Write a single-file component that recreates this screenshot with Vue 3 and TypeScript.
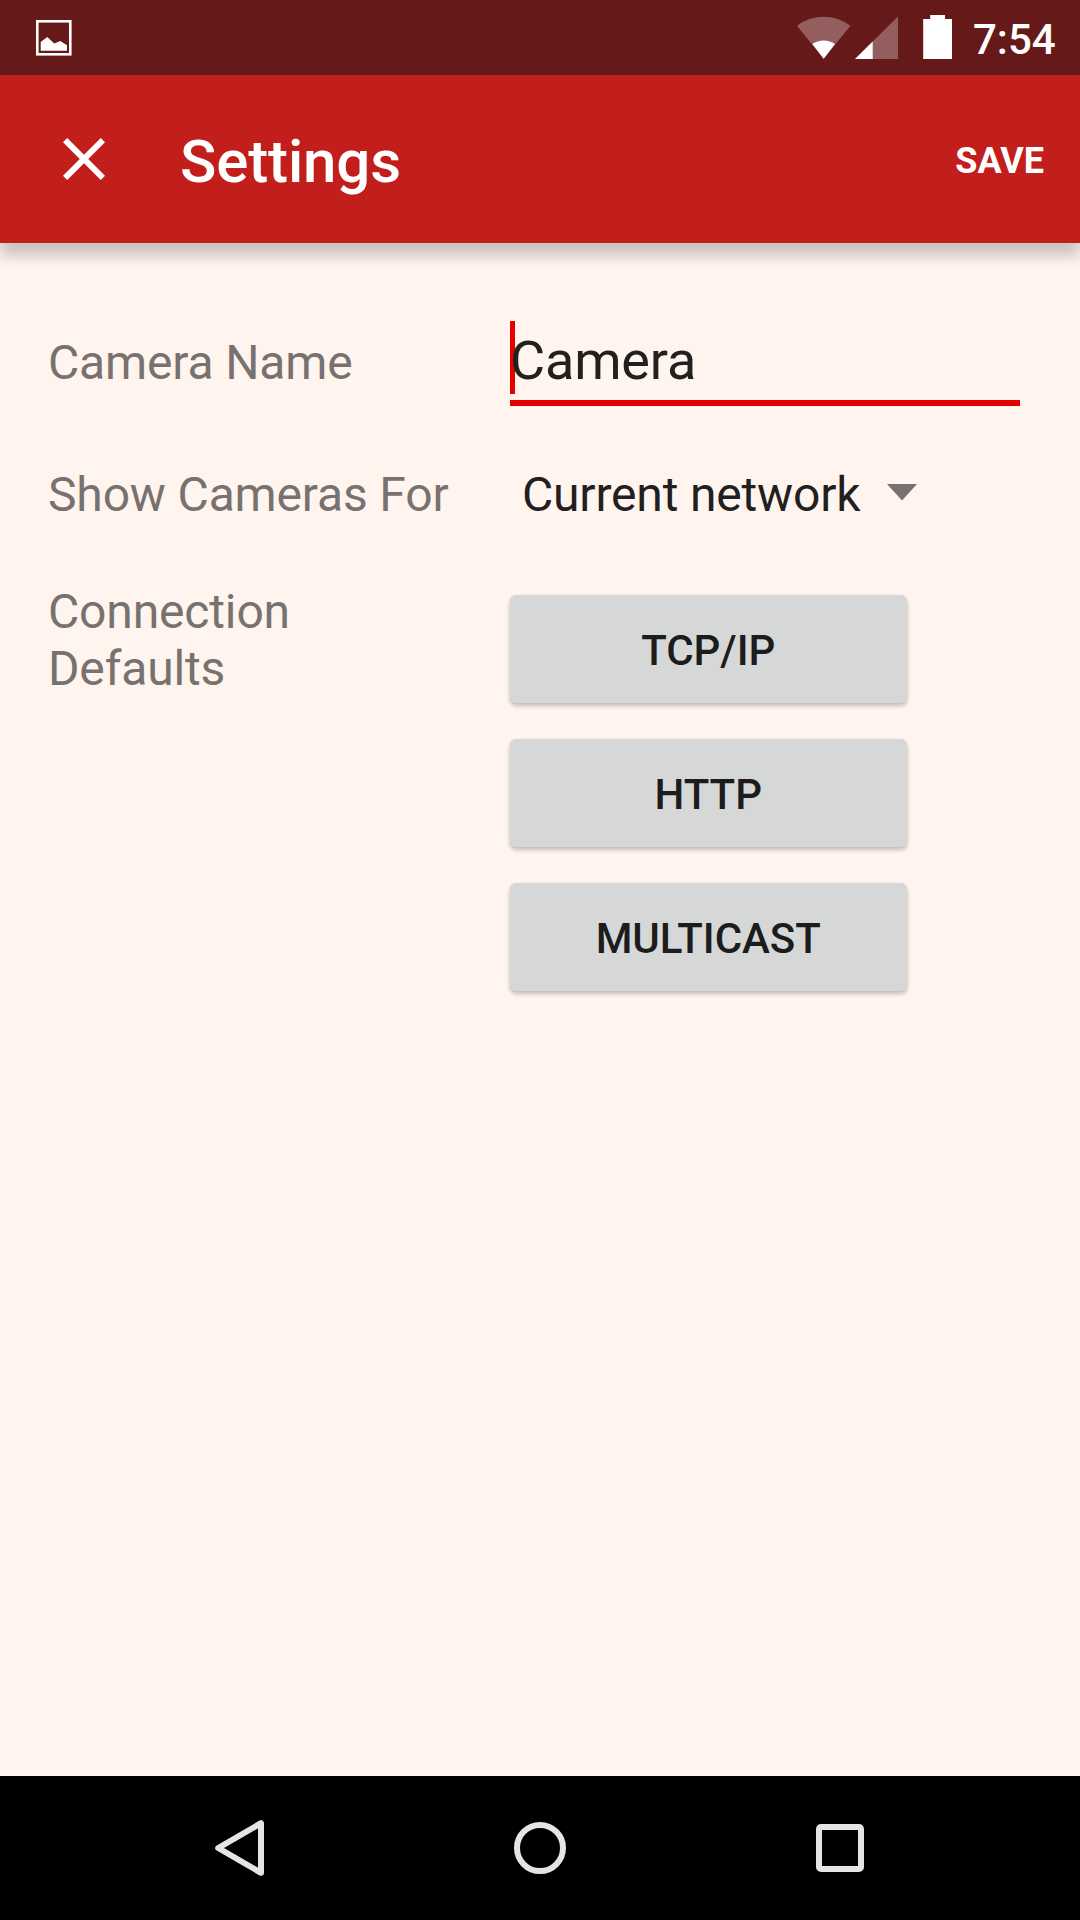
<script setup lang="ts">
import { ref } from 'vue'

const cameraName = ref<string>('Camera')
const networkScope = ref<string>('Current network')
const connectionTypes: string[] = ['TCP/IP', 'HTTP', 'MULTICAST']
</script>

<template>
  <div class="screen">
    <div class="status-bar">
      <svg class="picture-icon" width="36" height="36" viewBox="0 0 36 36">
        <rect x="1.3" y="1.3" width="33" height="33" fill="none" stroke="#fff" stroke-width="2.6" />
        <path d="M4.7 22 11.3 17 18.3 23.5 24.3 21 31 25.3V30.7H4.7z" fill="#fff" />
      </svg>
      <svg class="radio-icons" width="156" height="45" viewBox="0 0 156 45">
        <path d="M0 10.7A44 44 0 0 1 53.4 10.7L26.7 43.7z" fill="#fff" fill-opacity=".3" />
        <path d="M15.3 29A20 20 0 0 1 38 29L26.7 43.7z" fill="#fff" />
        <path d="M58 44 101 1.5V44z" fill="#fff" fill-opacity=".3" />
        <path d="M58 44 75.7 26.5V44z" fill="#fff" />
        <path d="M133.2 0H148V4H155V44H126.2V4H133.2z" fill="#fff" />
      </svg>
      <span class="clock">7:54</span>
    </div>

    <header class="app-bar">
      <svg class="close-icon" width="72" height="72" viewBox="0 0 24 24">
        <path d="M19 6.41 17.59 5 12 10.59 6.41 5 5 6.41 10.59 12 5 17.59 6.41 19 12 13.41 17.59 19 19 17.59 13.41 12z" fill="#fff" />
      </svg>
      <h1 class="title">Settings</h1>
      <span class="save">SAVE</span>
    </header>

    <main class="content">
      <div class="row name-row">
        <span class="label">Camera Name</span>
        <div class="field">
          <i class="caret"></i>
          <span class="value">{{ cameraName }}</span>
        </div>
      </div>
      <div class="row network-row">
        <span class="label">Show Cameras For</span>
        <div class="spinner">
          <span class="choice">{{ networkScope }}</span>
          <svg class="arrow" width="30" height="17" viewBox="0 0 30 17">
            <path d="M0 0H30L15 16.5z" fill="#77726f" />
          </svg>
        </div>
      </div>
      <div class="row defaults-row">
        <span class="label">Connection<br />Defaults</span>
        <div class="buttons">
          <button v-for="type in connectionTypes" :key="type" class="button">{{ type }}</button>
        </div>
      </div>
    </main>

    <nav class="nav-bar">
      <svg width="60" height="60" viewBox="0 0 60 60">
        <path d="M8.2 30 51 5.2V54.8z" fill="none" stroke="#e5e5e5" stroke-width="6" stroke-linejoin="round" />
      </svg>
      <svg width="60" height="60" viewBox="0 0 60 60">
        <circle cx="30" cy="30" r="23" fill="none" stroke="#e5e5e5" stroke-width="6" />
      </svg>
      <svg width="60" height="60" viewBox="0 0 60 60">
        <rect x="9" y="9" width="42" height="42" rx="2" fill="none" stroke="#e5e5e5" stroke-width="6" />
      </svg>
    </nav>
  </div>
</template>

<style>
body {
  margin: 0;
}
</style>

<style scoped>
.screen {
  width: 1080px;
  height: 1920px;
  display: flex;
  flex-direction: column;
  background: #fff4ee;
  font-family: Roboto, "Liberation Sans", sans-serif;
  overflow: hidden;
}
.status-bar {
  height: 75px;
  flex: none;
  display: flex;
  align-items: flex-start;
  background: #661919;
  color: #fff;
}
.picture-icon {
  margin: 20px 0 0 36px;
}
.radio-icons {
  margin: 15px 0 0 725px;
}
.clock {
  margin: 15px 0 0 20px;
  font-size: 42px;
  line-height: 49px;
  font-weight: 500;
}
.app-bar {
  height: 168px;
  flex: none;
  display: flex;
  align-items: center;
  box-sizing: border-box;
  padding: 0 36px 0 48px;
  background: #c21e1c;
  color: #fff;
  box-shadow: 0 13px 13px rgba(0, 0, 0, 0.2);
}
.title {
  margin: 0 0 0 60px;
  padding-top: 5px;
  font-size: 60px;
  line-height: 70px;
  font-weight: 500;
  letter-spacing: -0.13px;
}
.save {
  margin-left: auto;
  padding-top: 3px;
  font-size: 36px;
  line-height: 42px;
  font-weight: 700;
}
.content {
  flex: 1;
  padding: 78px 60px 0 48px;
}
.row {
  display: grid;
  grid-template-columns: 462px 510px;
  align-items: start;
}
.label {
  font-size: 48px;
  line-height: 57px;
  letter-spacing: -0.15px;
  color: #77726f;
}
.name-row .label {
  margin-top: 13px;
}
.field {
  height: 79px;
  display: grid;
  border-bottom: 6px solid #e20000;
  font-size: 54px;
  line-height: 63px;
  letter-spacing: -0.17px;
  color: #21201f;
}
.caret,
.value {
  grid-area: 1 / 1;
}
.caret {
  width: 5px;
  height: 73px;
  background: #e20000;
}
.value {
  padding-top: 8px;
}
.network-row {
  margin-top: 60px;
}
.spinner {
  display: flex;
  align-items: flex-start;
  padding-left: 12px;
  font-size: 48px;
  line-height: 57px;
  letter-spacing: -0.18px;
  color: #21201f;
}
.arrow {
  margin: 18px 0 0 27px;
}
.defaults-row {
  margin-top: 60px;
}
.buttons {
  width: 396.5px;
  margin-top: 12px;
  display: flex;
  flex-direction: column;
  gap: 36px;
}
.button {
  height: 108px;
  padding: 3px 0 0;
  border: 0;
  border-radius: 6px;
  background: #d6d8d7;
  box-shadow: 0 3px 4px rgba(0, 0, 0, 0.22), 0 0 2px rgba(0, 0, 0, 0.08);
  color: #1c1c1c;
  font: 500 42px/49px Roboto, "Liberation Sans", sans-serif;
  letter-spacing: -0.05px;
}
.nav-bar {
  height: 144px;
  flex: none;
  display: flex;
  align-items: center;
  justify-content: center;
  gap: 240px;
  background: #000;
}
</style>
